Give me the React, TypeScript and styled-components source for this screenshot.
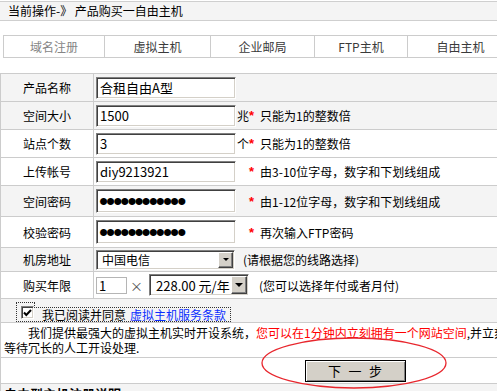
import React from "react";
import styled, { createGlobalStyle } from "styled-components";

const GlobalStyle = createGlobalStyle`
  html, body { margin: 0; padding: 0; background: #fff; overflow: hidden; }
  body {
    font-family: "Noto Sans CJK SC", "Liberation Sans", sans-serif;
    font-size: 12px;
    color: #000;
  }
`;

const Page = styled.div`
  width: 710px;
  padding-top: 1px;
`;

const Crumb = styled.div`
  height: 18px;
  line-height: 18px;
  border-top: 1px solid #cfcfcf;
  border-bottom: 1px solid #cfcfcf;
  background: #f4f4f4;
  padding-left: 8px;
`;

const Tabs = styled.nav`
  margin: 14px 0 0 3px;
  display: grid;
  grid-template-columns: 101px 106px 104px 93px 106px 1fr;
  height: 23px;
  box-sizing: border-box;
  border-top: 1px solid #cccccc;
  border-bottom: 1px solid #cccccc;
  border-left: 1px solid #cccccc;
`;

const Tab = styled.a<{ $muted?: boolean }>`
  display: flex;
  align-items: center;
  justify-content: center;
  border-right: 1px solid #cccccc;
  color: ${(p) => (p.$muted ? "#858585" : "#3a3a3a")};
  text-decoration: none;
`;

const Form = styled.form`
  margin: 15px 0 0 0;
  border-top: 1px solid #cccccc;
  border-left: 1px solid #cccccc;
  border-right: 1px solid #cccccc;
`;

const Row = styled.div<{ $h: number; $shade?: boolean }>`
  display: grid;
  grid-template-columns: 93px 1fr;
  height: ${(p) => p.$h}px;
  box-sizing: border-box;
  border-bottom: 1px solid #cccccc;
  background: ${(p) => (p.$shade ? "#f4f4f4" : "#ffffff")};
`;

const Label = styled.div`
  display: flex;
  align-items: center;
  justify-content: center;
  border-right: 1px solid #cccccc;
`;

const Value = styled.div`
  display: flex;
  align-items: center;
  padding-left: 2px;
  white-space: nowrap;
`;

const TextInput = styled.input<{ $h?: number }>`
  box-sizing: border-box;
  width: 140px;
  height: ${(p) => p.$h ?? 22}px;
  border: 1px solid;
  border-color: #808080 #ffffff #ffffff #808080;
  box-shadow: inset 1px 1px 0 #404040, inset -1px -1px 0 #d4d0c8;
  padding: 0 3px;
  margin: 0;
  font: 13px "Noto Sans CJK SC", "Liberation Sans", sans-serif;
  color: #000;
  background: #fff;
  outline: none;
`;

const PasswordInput = styled(TextInput)`
  font: 26px "Liberation Sans", sans-serif;
  letter-spacing: -2px;
  padding: 0 2px;
`;

const Unit = styled.span`
  display: inline-block;
  width: 12px;
  margin-left: 1px;
`;

const Star = styled.span`
  color: #ff0000;
  font: bold 13px "Liberation Sans", sans-serif;
  vertical-align: -3px;
  margin-right: 6px;
`;

const Hint = styled.span<{ $gap?: number }>`
  margin-left: ${(p) => p.$gap ?? 0}px;
`;

const SelectBox = styled.span<{ $w: number; $h: number }>`
  position: relative;
  display: inline-flex;
  width: ${(p) => p.$w}px;
  height: ${(p) => p.$h}px;
`;

const Select = styled.select<{ $size: number; $pad: number }>`
  appearance: none;
  -webkit-appearance: none;
  box-sizing: border-box;
  width: 100%;
  height: 100%;
  margin: 0;
  border: 1px solid;
  border-color: #808080 #ffffff #ffffff #808080;
  box-shadow: inset 1px 1px 0 #404040, inset -1px -1px 0 #d4d0c8;
  border-radius: 0;
  padding: 0 0 0 ${(p) => p.$pad}px;
  font: ${(p) => p.$size}px "Noto Sans CJK SC", "Liberation Sans", sans-serif;
  color: #000;
  background: #fff;
  outline: none;
`;

const ArrowBtn = styled.span<{ $w: number; $h: number }>`
  position: absolute;
  right: 2px;
  top: 2px;
  width: ${(p) => p.$w}px;
  height: ${(p) => p.$h}px;
  box-sizing: border-box;
  background: #d4d0c8;
  border: 1px solid;
  border-color: #ffffff #404040 #404040 #ffffff;
  box-shadow: inset -1px -1px 0 #808080;
  display: flex;
  align-items: center;
  justify-content: center;
  pointer-events: none;
`;

const QtyInput = styled.input`
  box-sizing: border-box;
  width: 31px;
  height: 17px;
  margin: 0;
  border: 1px solid #b5b5b5;
  padding: 0 2px;
  font: 13px "Noto Sans CJK SC", "Liberation Sans", sans-serif;
  outline: none;
  background: #fff;
`;

const Times = styled.span`
  color: #555;
  font-size: 13px;
  margin: 0 6px 0 3px;
`;

const FullCell = styled.div<{ $pad?: string }>`
  grid-column: 1 / -1;
  padding: ${(p) => p.$pad ?? "0"};
`;

const Agree = styled.label`
  display: inline-flex;
  align-items: flex-start;
  margin: 3px 0 0 15px;
  cursor: pointer;
`;

const CheckArea = styled.span`
  box-sizing: border-box;
  width: 19px;
  height: 20px;
  border: 1px dotted #333;
  padding: 3px 0 0 4px;
`;

const CheckBox = styled.span`
  display: flex;
  align-items: center;
  justify-content: center;
  box-sizing: border-box;
  width: 13px;
  height: 13px;
  border: 1px solid;
  border-color: #808080 #ffffff #ffffff #808080;
  box-shadow: inset 1px 1px 0 #404040, inset -1px -1px 0 #d4d0c8;
  background: #fff;
`;

const AgreeText = styled.span`
  position: relative;
  box-sizing: border-box;
  margin: 5px 0 0 -1px;
  height: 15px;
  line-height: 13px;
  border: 1px dotted #333;
  border-left: none;
  padding: 0 4px 0 8px;
  background: #f4f4f4;
`;

const Link = styled.a`
  color: #0a2dff;
  text-decoration: none;
  margin-left: 4px;
`;

const Intro = styled.p`
  margin: 0;
  line-height: 15px;
  text-indent: 24px;
  white-space: nowrap;
`;

const Red = styled.span`
  color: #ff0000;
`;

const ButtonCell = styled(FullCell)`
  position: relative;
  display: flex;
  align-items: center;
  justify-content: center;
`;

const NextButton = styled.button`
  box-sizing: border-box;
  width: 101px;
  height: 22px;
  margin: 0;
  border: 1px solid #000;
  box-shadow: inset 1px 1px 0 #ffffff, inset -1px -1px 0 #808080;
  background: #d4d0c8;
  font: 13px "Noto Sans CJK SC", sans-serif;
  letter-spacing: 7.5px;
  padding: 0 0 0 7.5px;
  color: #000;
`;

const Ring = styled.svg`
  position: absolute;
  left: 260px;
  top: -21px;
  width: 186px;
  height: 52px;
  overflow: visible;
  pointer-events: none;
`;

const SectionTitle = styled.h3`
  margin: 0;
  padding: 1px 0 0 3px;
  font-size: 13px;
  font-weight: bold;
  line-height: 18px;
`;

const Arrow = ({ size }: { size: number }) => (
  <svg width={size} height={Math.ceil(size / 2)} viewBox="0 0 8 4">
    <path d="M0 0H8L4 4Z" fill="#000" />
  </svg>
);

export default function App() {
  return (
    <>
      <GlobalStyle />
      <Page>
        <Crumb>当前操作-》 产品购买一自由主机</Crumb>
        <Tabs>
          <Tab $muted>域名注册</Tab>
          <Tab>虚拟主机</Tab>
          <Tab>企业邮局</Tab>
          <Tab>FTP主机</Tab>
          <Tab>自由主机</Tab>
          <span />
        </Tabs>
        <Form onSubmit={(e) => e.preventDefault()}>
          <Row $h={28} $shade>
            <Label>产品名称</Label>
            <Value>
              <TextInput defaultValue="合租自由A型" />
            </Value>
          </Row>
          <Row $h={28} $shade>
            <Label>空间大小</Label>
            <Value>
              <TextInput defaultValue="1500" />
              <Unit>兆</Unit>
              <Star>*</Star>
              只能为1的整数倍
            </Value>
          </Row>
          <Row $h={28}>
            <Label>站点个数</Label>
            <Value>
              <TextInput defaultValue="3" />
              <Unit>个</Unit>
              <Star>*</Star>
              只能为1的整数倍
            </Value>
          </Row>
          <Row $h={28}>
            <Label>上传帐号</Label>
            <Value>
              <TextInput defaultValue="diy9213921" />
              <Unit />
              <Star>*</Star>
              由3-10位字母，数字和下划线组成
            </Value>
          </Row>
          <Row $h={31} $shade>
            <Label>空间密码</Label>
            <Value>
              <PasswordInput type="password" $h={24} defaultValue="diy921392100" />
              <Unit />
              <Star>*</Star>
              由1-12位字母，数字和下划线组成
            </Value>
          </Row>
          <Row $h={31}>
            <Label>校验密码</Label>
            <Value>
              <PasswordInput type="password" $h={24} defaultValue="diy921392100" />
              <Unit />
              <Star>*</Star>
              再次输入FTP密码
            </Value>
          </Row>
          <Row $h={24} $shade>
            <Label>机房地址</Label>
            <Value>
              <SelectBox $w={139} $h={20}>
                <Select $size={12} $pad={5} defaultValue="电信">
                  <option value="电信">中国电信</option>
                  <option value="网通">中国网通</option>
                </Select>
                <ArrowBtn $w={15} $h={16}>
                  <Arrow size={6} />
                </ArrowBtn>
              </SelectBox>
              <Hint $gap={8}>(请根据您的线路选择)</Hint>
            </Value>
          </Row>
          <Row $h={27}>
            <Label>购买年限</Label>
            <Value>
              <QtyInput defaultValue="1" />
              <Times>×</Times>
              <SelectBox $w={100} $h={22}>
                <Select $size={13} $pad={6} defaultValue="year">
                  <option value="year">228.00 元/年</option>
                  <option value="month">19.00 元/月</option>
                </Select>
                <ArrowBtn $w={16} $h={18}>
                  <Arrow size={8} />
                </ArrowBtn>
              </SelectBox>
              <Hint $gap={10}>(您可以选择年付或者月付)</Hint>
            </Value>
          </Row>
          <Row $h={24} $shade>
            <FullCell>
              <Agree>
                <CheckArea>
                  <CheckBox role="checkbox" aria-checked="true">
                    <svg width="9" height="8" viewBox="0 0 9 8">
                      <path d="M1 3.5L3.3 6L8 1" fill="none" stroke="#000" strokeWidth="2" />
                    </svg>
                  </CheckBox>
                </CheckArea>
                <AgreeText>
                  我已阅读并同意<Link href="#">虚拟主机服务条款</Link>
                </AgreeText>
              </Agree>
            </FullCell>
          </Row>
          <Row $h={35}>
            <FullCell $pad="2px 3px 0 3px">
              <Intro>
                我们提供最强大的虚拟主机实时开设系统，
                <Red>您可以在1分钟内立刻拥有一个网站空间</Red>,并立刻开通使用，无需
                <br />
                等待冗长的人工开设处理.
              </Intro>
            </FullCell>
          </Row>
          <Row $h={26}>
            <ButtonCell>
              <NextButton type="submit">下一步</NextButton>
              <Ring viewBox="0 0 186 52">
                <ellipse cx="93" cy="26" rx="92" ry="25" fill="none" stroke="#e8262d" strokeWidth="1.3" />
              </Ring>
            </ButtonCell>
          </Row>
          <Row $h={40} $shade>
            <FullCell>
              <SectionTitle>自由型主机注册说明</SectionTitle>
            </FullCell>
          </Row>
        </Form>
      </Page>
    </>
  );
}
